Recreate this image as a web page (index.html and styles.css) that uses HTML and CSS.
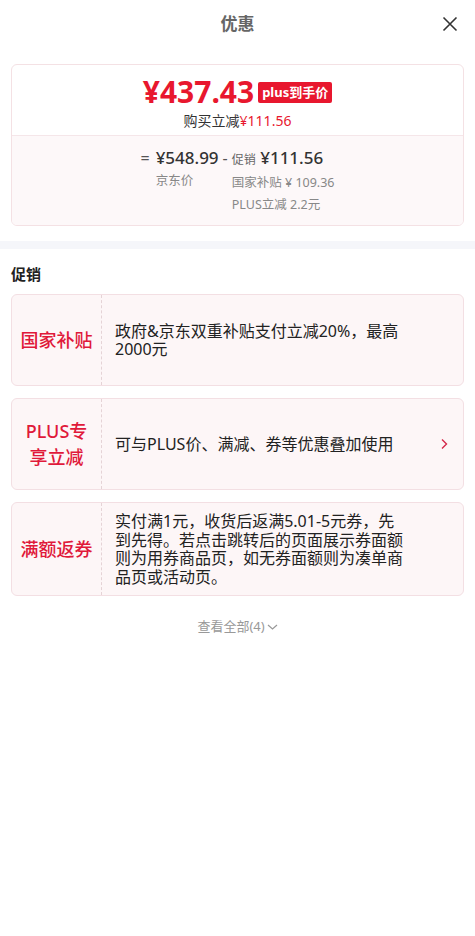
FILE: index.html
```html
<!DOCTYPE html>
<html lang="zh-CN">
<head>
  <meta charset="UTF-8" />
  <meta name="viewport" content="width=device-width, initial-scale=1.0"/>
  <title>优惠</title>
  <link rel="stylesheet" href="styles.css">
</head>
<body>
  <div class="header">
    <h1>优惠</h1>
    <span class="close">
      <svg width="16" height="16" viewBox="0 0 16 16"><path d="M1.5 1.5 L14.5 14.5 M14.5 1.5 L1.5 14.5" stroke="#333" stroke-width="1.6" fill="none"/></svg>
    </span>
  </div>

  <div class="summary">
    <div class="summary-top">
      <div class="final">
        <span class="final-price">¥437.43</span>
        <span class="badge">plus到手价</span>
      </div>
      <div class="save">购买立减<span class="red">¥111.56</span></div>
    </div>
    <div class="summary-bottom">
      <span class="op">=</span>
      <div class="col">
        <div class="amount">¥548.99</div>
        <div class="note">京东价</div>
      </div>
      <span class="op minus">-</span>
      <div class="col">
        <div class="amount"><span class="tag">促销</span> ¥111.56</div>
        <div class="note">国家补贴 ¥ 109.36</div>
        <div class="note">PLUS立减 2.2元</div>
      </div>
    </div>
  </div>

  <div class="band"></div>

  <div class="promos">
    <h2>促销</h2>

    <div class="promo">
      <div class="promo-label">国家补贴</div>
      <div class="promo-text">政府&amp;京东双重补贴支付立减20%，最高2000元</div>
    </div>

    <div class="promo">
      <div class="promo-label">PLUS专<br>享立减</div>
      <div class="promo-text">可与PLUS价、满减、券等优惠叠加使用</div>
      <span class="arrow">
        <svg width="8" height="12" viewBox="0 0 8 12"><path d="M2 1.5 L6.5 6 L2 10.5" stroke="#d4284a" stroke-width="1.4" fill="none"/></svg>
      </span>
    </div>

    <div class="promo">
      <div class="promo-label">满额返券</div>
      <div class="promo-text">实付满1元，收货后返满5.01-5元券，先到先得。若点击跳转后的页面展示券面额则为用券商品页，如无券面额则为凑单商品页或活动页。</div>
    </div>

    <div class="more">查看全部(4)<svg width="11" height="8" viewBox="0 0 11 8"><path d="M1 2 L5.5 6 L10 2" stroke="#999" stroke-width="1.2" fill="none"/></svg></div>
  </div>
</body>
</html>
```

FILE: styles.css
```css
body {
  margin: 0;
  font-family: "Noto Sans", "Noto Sans CJK SC", sans-serif;
  color: #333;
  background: #fff;
}
.header {
  position: relative;
  height: 44px;
  display: flex;
  align-items: center;
  justify-content: center;
}
.header h1 {
  margin: 0;
  font-size: 17px;
  font-weight: bold;
  color: #666;
}
.close {
  position: absolute;
  right: 17px;
  top: 15px;
  width: 16px;
  height: 16px;
}
.summary {
  margin: 20px 11px 0;
  border: 1px solid #f4e1e4;
  border-radius: 6px;
  overflow: hidden;
}
.summary-top {
  padding: 9px 0 4px;
  text-align: center;
  border-bottom: 1px solid #f5e6e9;
}
.final {
  display: flex;
  justify-content: center;
  align-items: center;
  height: 36px;
}
.final-price {
  font-size: 30px;
  line-height: 36px;
  font-weight: bold;
  color: #e8172e;
}
.badge {
  margin-left: 4px;
  padding: 0 4px;
  height: 21px;
  line-height: 21px;
  background: #e8172e;
  color: #fff;
  font-size: 13px;
  font-weight: bold;
  border-radius: 2px;
}
.save {
  margin-top: 1px;
  font-size: 14px;
  line-height: 20px;
  color: #333;
}
.red {
  color: #e8172e;
}
.summary-bottom {
  background: #fdf8f9;
  display: flex;
  justify-content: center;
  align-items: flex-start;
  padding: 10px 0 9px 0;
}
.op {
  font-size: 16px;
  line-height: 24px;
  color: #555;
  margin-right: 6px;
}
.minus {
  margin: 0 4px 0 4px;
}
.amount {
  font-size: 17px;
  line-height: 24px;
  font-weight: 500;
  color: #333;
}
.tag {
  font-size: 12px;
  color: #666;
  font-weight: normal;
}
.note {
  font-size: 12.5px;
  line-height: 22px;
  color: #888;
}
.band {
  margin-top: 15px;
  height: 8px;
  background: #f5f6fa;
}
.promos {
  padding: 0 11px;
}
.promos h2 {
  margin: 0;
  padding-top: 14px;
  font-size: 15px;
  line-height: 22px;
  font-weight: bold;
  color: #222;
  margin-bottom: 9px;
}
.promo {
  display: flex;
  align-items: stretch;
  min-height: 92px;
  box-sizing: border-box;
  margin-bottom: 12px;
  background: #fdf6f7;
  border: 1px solid #f3dfe3;
  border-radius: 6px;
}
.promo-label {
  width: 89px;
  flex-shrink: 0;
  display: flex;
  align-items: center;
  justify-content: center;
  text-align: center;
  font-size: 18px;
  line-height: 26px;
  font-weight: 500;
  color: #e0193a;
  border-right: 1px dashed #e5d3d6;
}
.promo-text {
  width: 290px;
  padding: 9px 0 9px 13px;
  align-self: center;
  font-size: 16px;
  line-height: 18.5px;
  color: #222;
}
.arrow {
  margin-left: auto;
  margin-right: 15px;
  align-self: center;
  display: flex;
}
.more {
  margin-top: 20px;
  text-align: center;
  font-size: 13px;
  line-height: 20px;
  color: #999;
}
.more svg {
  margin-left: 2px;
}
```
